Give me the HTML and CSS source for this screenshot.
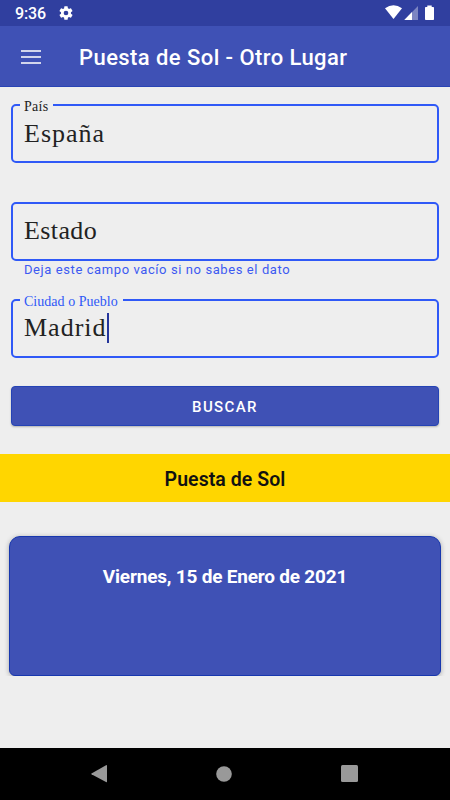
FILE: index.html
```html
<!DOCTYPE html>
<html lang="es">
<head>
<meta charset="utf-8">
<title>Puesta de Sol</title>
<link rel="stylesheet" href="styles.css">
</head>
<body>
<div class="status">
  <span class="clock">9:36</span>
  <svg class="gear" width="16" height="16" viewBox="0 0 24 24"><path fill="#fff" d="M19.4 13a7.600 7.600 0 0 0 0-2l2.100-1.650a.5.5 0 0 0 .12-.64l-2-3.460a.5.5 0 0 0-.61-.22l-2.490 1a7.300 7.300 0 0 0-1.690-.98l-.38-2.650A.5.5 0 0 0 14 2h-4a.5.5 0 0 0-.49.42l-.38 2.650a7.700 7.700 0 0 0-1.690.98l-2.490-1a.5.500 0 0 0-.61.22l-2 3.460a.5.5 0 0 0 .12.640L4.570 11a8 8 0 0 0 0 2l-2.110 1.650a.5.5 0 0 0-.12.640l2 3.460c.12.220.39.300.61.220l2.490-1c.52.400 1.080.730 1.690.980l.38 2.650c.03.240.240.420.490.420h4c.25 0 .46-.18.490-.42l.38-2.650a7.700 7.700 0 0 0 1.690-.98l2.490 1c.23.090.490 0 .61-.22l2-3.460a.5.5 0 0 0-.12-.64zM12 15.500a3.500 3.500 0 1 1 0-7 3.500 3.500 0 0 1 0 7z"/></svg>
  <svg class="signals" width="52" height="16" viewBox="0 0 52 16"><path fill="#fff" d="M0 3.300Q8.500-2.700 17 3.300L8.500 14z"/><path fill="#7c85c2" d="M33 1v14H19.300z"/><path fill="#fff" d="M27 7v8h-7.700z"/><path fill="#fff" d="M42.300 2H40.800q-.8 0-.8.800v11.400q0 .8.800.8h7.400q.8 0 .8-.8V2.800q0-.8-.8-.8h-1.500V.500h-4.400z"/></svg>
</div>
<header class="appbar">
  <svg class="menu" width="20" height="14" viewBox="0 0 20 14"><path d="M0 1h20M0 7h20M0 13h20" stroke="#d2d5ec" stroke-width="2"/></svg>
  <h1>Puesta de Sol - Otro Lugar</h1>
</header>
<main>
  <fieldset class="field"><legend class="pais"><span>País</span></legend><span class="value v-pais">España</span></fieldset>
  <div class="field plain"><span class="value v-estado">Estado</span></div>
  <p class="helper">Deja este campo vacío si no sabes el dato</p>
  <fieldset class="field"><legend class="ciudad"><span>Ciudad o Pueblo</span></legend><span class="value v-madrid">Madrid</span><i class="caret"></i></fieldset>
  <button class="search">BUSCAR</button>
  <h2 class="banner">Puesta de Sol</h2>
  <div class="results"><section class="card">Viernes, 15 de Enero de 2021</section></div>
</main>
<nav class="navbar">
  <svg width="16" height="18" viewBox="0 0 16 18"><path fill="#999" d="M.5 8.500 15 .2q1-.5 1 .6v15.800q0 1-1 .5L.5 9.200q-.6-.35 0-.7z"/></svg>
  <svg width="16" height="16" viewBox="0 0 16 16"><circle cx="8" cy="8" r="7.800" fill="#999"/></svg>
  <svg width="17" height="17" viewBox="0 0 17 17"><rect width="17" height="17" rx="1.500" fill="#999"/></svg>
</nav>
</body>
</html>
```
FILE: styles.css
```css
* { box-sizing: border-box; }
body { margin: 0; height: 800px; display: flex; flex-direction: column; overflow: hidden; background: #eee; font-family: Roboto, sans-serif; }
.status { height: 26px; flex: none; display: flex; align-items: center; padding: 1px 15px 0; background: #303f9f; color: #fff; }
.clock { width: 43px; margin-top: 1px; font-size: 16px; line-height: 18px; letter-spacing: -.1px; font-weight: 500; white-space: nowrap; }
.gear { flex: none; margin-top: -1px; }
.signals { margin-left: auto; margin-right: -2px; margin-top: -1px; }
.appbar { height: 61px; flex: none; display: flex; align-items: center; padding: 2px 21px 0; background: #3f51b5; border-bottom: 1px solid #2944b5; color: #fff; }
.menu { flex: none; }
h1 { margin: 2px 0 0 38px; font-size: 22px; line-height: 26px; font-weight: 500; letter-spacing: .43px; white-space: nowrap; }
main { flex: 1; display: flex; flex-direction: column; padding-top: 12px; }
.field { flex: none; height: 64px; margin: 0 11px; min-width: 0; padding: 0 11px; border: 2px solid #2f59f7; border-radius: 5px; display: flex; color: #222; }
legend { height: 12px; margin-left: -4px; padding: 0 4px 0 4px; font: 14px/16px "Liberation Serif", serif; white-space: nowrap; }
.pais { width: 33px; letter-spacing: .3px; }
.ciudad { width: 103px; color: #2f59f7; letter-spacing: .03px; }
.value { font: 26px/32px "Liberation Serif", serif; margin: 7px 0 0 0; white-space: nowrap; }
.v-pais { letter-spacing: 1px; }
.v-estado { letter-spacing: .4px; margin-top: 11px; }
.v-madrid { letter-spacing: 1px; margin-top: 6px; }
.caret { width: 2px; height: 30px; margin-top: 7px; background: #25359b; }
.plain { height: 59px; margin-top: 39px; }
.helper { margin: 0 24px; height: 18px; font-size: 13px; line-height: 18px; letter-spacing: .59px; color: #3d5af1; white-space: nowrap; }
.helper + .field { margin-top: 15px; }
.search { flex: none; height: 40px; margin: 28px 11px 0; padding: 1px 0 0; border: 1px solid #2443b5; border-radius: 4px; background: #3f51b5; color: #fff; font: 500 15px/18px Roboto, sans-serif; letter-spacing: 1.4px; box-shadow: 0 1px 2px rgba(0, 0, 0, .25); }
.banner { flex: none; height: 48px; margin: 28px 0 0; padding-top: 1px; background: #ffd600; color: #111; font-size: 19.500px; line-height: 49px; font-weight: 600; letter-spacing: .05px; text-align: center; }
.results { height: 154px; margin-top: 20px; padding: 14px 9px 0; overflow: hidden; }
.card { height: 140px; padding-top: 28px; border: 1px solid #1737ae; border-radius: 11px 11px 6px 6px; background: #3f51b5; color: #fff; font-size: 19px; line-height: 24px; font-weight: 700; letter-spacing: -.2px; text-align: center; box-shadow: 0 1px 5px rgba(0, 0, 0, .3); }
.navbar { height: 52px; flex: none; display: flex; align-items: center; justify-content: space-between; padding: 0 92px 1px 91px; background: #000; }
```
